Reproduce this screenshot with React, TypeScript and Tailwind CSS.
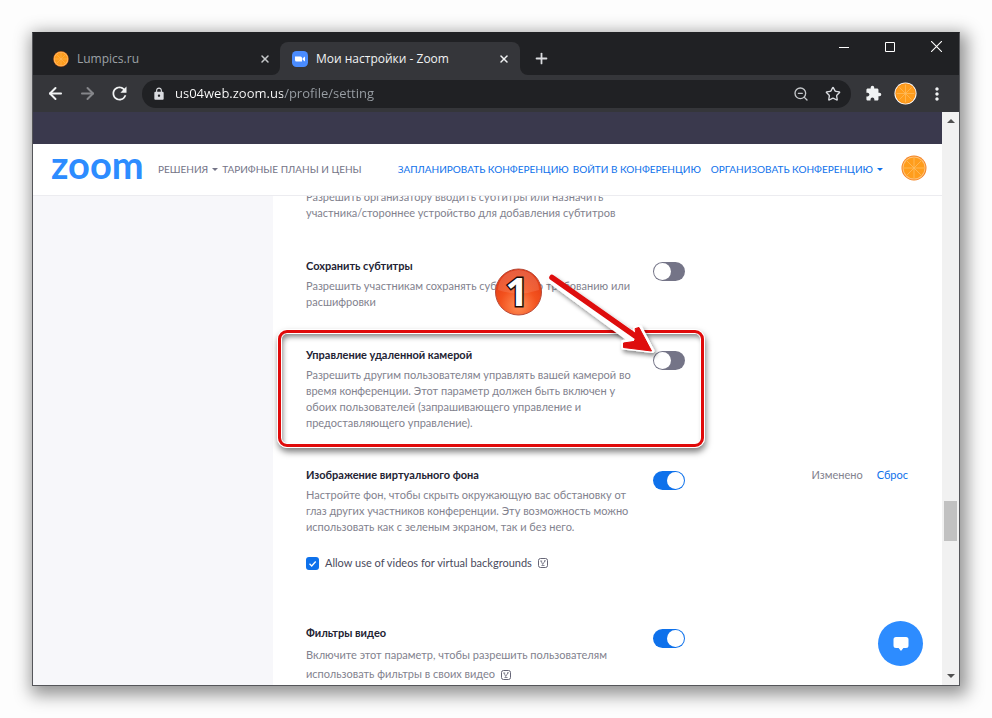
import type { ReactNode } from "react";
import { ArrowLeft, ArrowRight, Plus, Star, X, ZoomOut } from "lucide-react";
import { MdExtension, MdLock, MdMoreVert, MdRefresh } from "react-icons/md";

export default function App() {
  return (
    <div className="flex min-h-screen flex-col bg-[#fdfdfd] p-8 font-['Lato',sans-serif]">
      <div className="flex grow flex-col border border-[#55565a] border-t-[#202124] bg-white shadow-[3px_5px_16px_4px_rgba(0,0,0,0.42)]">
        <TabStrip />
        <Toolbar />
        <div className="flex grow">
          <div className="relative flex min-w-0 grow flex-col">
            <div className="h-8 bg-[#3a394d]" />
            <SiteHeader />
            <div className="flex grow overflow-hidden">
              <aside className="w-[240px] shrink-0 bg-[#f7f7fa]" />
              <Settings />
            </div>
            <button
              aria-label="Chat"
              className="absolute right-[19px] bottom-[19px] flex size-[45px] items-center justify-center rounded-full bg-[#2d8cff]"
            >
              <svg viewBox="0 0 16 14" className="h-[14px] w-4 fill-white">
                <path d="M3 0h10a2.5 2.5 0 0 1 2.5 2.5v6A2.5 2.5 0 0 1 13 11h-2.6L8 14l-2.4-3H3A2.5 2.5 0 0 1 .5 8.5v-6A2.5 2.5 0 0 1 3 0Z" />
              </svg>
            </button>
          </div>
          <Scrollbar />
        </div>
      </div>
    </div>
  );
}

function TabStrip() {
  return (
    <div className="flex h-[42px] items-end bg-[#202124] font-['Open_Sans',sans-serif] text-xs">
      <div className="flex h-[33px] w-[247px] shrink-0 items-center pr-[9px] pl-5 text-[#9da1a6]">
        <Orange className="size-4" />
        <span className="ml-2 grow">Lumpics.ru</span>
        <button aria-label="Close tab" className="text-[#c6c8ca]">
          <X className="size-3" strokeWidth={3} />
        </button>
      </div>
      <div className="relative flex h-[33px] w-[240px] shrink-0 items-center rounded-t-lg bg-[#35363a] pr-[10px] pl-3 text-[#f1f3f4]">
        <TabFlare className="absolute bottom-0 -left-2 size-2" />
        <TabFlare className="absolute -right-2 bottom-0 size-2 -scale-x-100" />
        <svg viewBox="0 0 16 16" className="size-4">
          <rect width="16" height="16" rx="4.5" fill="#4a8cff" />
          <path d="M3 5.5h5.5a1.5 1.5 0 0 1 1.5 1.5v3.5H4.5A1.5 1.5 0 0 1 3 9ZM10.6 7.2 13 5.5v5l-2.4-1.7Z" fill="#fff" />
        </svg>
        <span className="ml-2 grow">Мои настройки - Zoom</span>
        <button aria-label="Close tab">
          <X className="size-3" strokeWidth={3} />
        </button>
      </div>
      <button aria-label="New tab" className="mb-2 ml-[13px] text-[#dadcdf]">
        <Plus className="size-[17px]" strokeWidth={2.5} />
      </button>
      <div className="ml-auto flex items-center gap-9 self-start pt-2 pr-[17px] text-white">
        <button aria-label="Minimize">
          <svg viewBox="0 0 10 10" className="size-[10px]" stroke="currentColor">
            <path d="M0 5.5h10" />
          </svg>
        </button>
        <button aria-label="Maximize">
          <svg viewBox="0 0 10 10" className="size-[10px]" fill="none" stroke="currentColor">
            <path d="M.5.5h9v9h-9Z" />
          </svg>
        </button>
        <button aria-label="Close window">
          <svg viewBox="0 0 10 10" className="size-[11px]" stroke="currentColor">
            <path d="m0 0 10 10M10 0 0 10" />
          </svg>
        </button>
      </div>
    </div>
  );
}

function TabFlare({ className }: { className: string }) {
  return (
    <svg viewBox="0 0 8 8" className={className}>
      <path d="M8 0v8H0a8 8 0 0 0 8-8Z" fill="#35363a" />
    </svg>
  );
}

function Toolbar() {
  return (
    <div className="flex h-[37px] items-center bg-[#35363a] pr-3 pl-[13px] text-[#f1f3f4]">
      <button aria-label="Back">
        <ArrowLeft className="size-[19px]" strokeWidth={2.5} />
      </button>
      <button aria-label="Forward" className="ml-[13px] text-[#85868a]">
        <ArrowRight className="size-[19px]" strokeWidth={2.5} />
      </button>
      <button aria-label="Reload" className="ml-3">
        <MdRefresh className="size-[21px]" />
      </button>
      <div className="ml-3 flex h-7 grow items-center rounded-full bg-[#202124] px-[10px]">
        <MdLock className="size-[14px] text-[#dadce0]" />
        <input
          aria-label="Address"
          readOnly
          value="us04web.zoom.us/profile/setting"
          className="ml-[9px] min-w-0 grow bg-[linear-gradient(90deg,#ffffff_108px,#9aa0a6_108px)] bg-clip-text font-['Open_Sans',sans-serif] text-[13px] text-transparent outline-none"
        />
        <button aria-label="Zoom" className="text-[#c4c7ca]">
          <ZoomOut className="size-4" />
        </button>
        <button aria-label="Bookmark" className="ml-4 text-[#dadce0]">
          <Star className="size-4" />
        </button>
      </div>
      <button aria-label="Extensions" className="ml-[14px]">
        <MdExtension className="size-[17px]" />
      </button>
      <button aria-label="Profile" className="ml-3">
        <Orange className="size-[23px]" rim />
      </button>
      <button aria-label="Menu" className="ml-[10px]">
        <MdMoreVert className="size-5" />
      </button>
    </div>
  );
}

function SiteHeader() {
  return (
    <header className="flex h-[52px] items-center border-b border-[#ececf0] bg-white pr-[15px] pl-[18px] text-[10px] whitespace-nowrap">
      <a href="#" className="-mt-[10px] w-[90px] shrink-0 text-[38px] font-bold text-[#2d8cff]">
        zoom
      </a>
      <nav className="ml-[17px] flex items-center gap-1 text-[#747487]">
        <a href="#" className="flex items-center gap-1">
          РЕШЕНИЯ <Caret />
        </a>
        <a href="#">ТАРИФНЫЕ ПЛАНЫ И ЦЕНЫ</a>
      </nav>
      <nav className="ml-auto flex items-center text-[#0e71eb]">
        <a href="#">ЗАПЛАНИРОВАТЬ КОНФЕРЕНЦИЮ</a>
        <a href="#" className="ml-1">ВОЙТИ В КОНФЕРЕНЦИЮ</a>
        <a href="#" className="ml-[10px] flex items-center gap-1">
          ОРГАНИЗОВАТЬ КОНФЕРЕНЦИЮ <Caret />
        </a>
      </nav>
      <a href="#" aria-label="Profile" className="mb-1 ml-[18px] shrink-0">
        <Orange className="size-[26px]" />
      </a>
    </header>
  );
}

function Caret() {
  return (
    <svg viewBox="0 0 6 3" className="h-[3px] w-[6px]" fill="currentColor">
      <path d="M0 0h6L3 3Z" />
    </svg>
  );
}

function Settings() {
  return (
    <main className="min-w-0 grow bg-white pr-[34px] pl-[33px] text-[11px] leading-4 text-[#82828e]">
      <p className="-mt-[7px] w-[332px]">
        Разрешить организатору вводить субтитры или назначить участника/стороннее устройство для добавления субтитров
      </p>

      <Setting id="captions" title="Сохранить субтитры" className="mt-[37px]">
        <p>
          Разрешить участникам сохранять субтитры по требованию или
          <br />
          расшифровки
        </p>
      </Setting>

      <div className="relative mt-[37px]">
        <Setting id="camera" title="Управление удаленной камерой">
          <p>
            Разрешить другим пользователям управлять вашей камерой во
            <br />
            время конференции. Этот параметр должен быть включен у
            <br />
            обоих пользователей (запрашивающего управление и
            <br />
            предоставляющего управление).
          </p>
        </Setting>
        <Callout />
      </div>

      <Setting id="background" title="Изображение виртуального фона" className="mt-9" defaultOn changed>
        <p>
          Настройте фон, чтобы скрыть окружающую вас обстановку от
          <br />
          глаз других участников конференции. Эту возможность можно
          <br />
          использовать как с зеленым экраном, так и без него.
        </p>
        <label className="mt-5 flex items-center text-[#4a4a5c]">
          <span className="relative flex size-[13px]">
            <input type="checkbox" defaultChecked className="size-[13px] appearance-none rounded-[3px] bg-[#0e71eb]" />
            <svg viewBox="0 0 13 13" className="pointer-events-none absolute inset-0" fill="none" stroke="#fff" strokeWidth="1.3">
              <path d="m3.5 6.8 2.2 2.2 4-4.5" />
            </svg>
          </span>
          <span className="mr-[6px] ml-[6px]">Allow use of videos for virtual backgrounds</span>
          <InfoMark />
        </label>
      </Setting>

      <Setting id="filters" title="Фильтры видео" className="mt-[54px]" defaultOn>
        <p className="leading-[19px]">
          Включите этот параметр, чтобы разрешить пользователям
          <br />
          использовать фильтры в своих видео&nbsp; <InfoMark />
        </p>
      </Setting>
    </main>
  );
}

type SettingProps = {
  id: string;
  title: string;
  children: ReactNode;
  className?: string;
  defaultOn?: boolean;
  changed?: boolean;
};

function Setting({ id, title, children, className = "", defaultOn, changed }: SettingProps) {
  return (
    <section className={`flex items-start whitespace-nowrap ${className}`}>
      <div className="w-[347px] shrink-0">
        <label htmlFor={id} className="mb-1 block font-bold text-[#232333]">
          {title}
        </label>
        {children}
      </div>
      <input
        id={id}
        type="checkbox"
        role="switch"
        defaultChecked={defaultOn}
        className="mt-1 flex h-[19px] w-8 shrink-0 appearance-none rounded-full bg-[#747487] p-px before:size-[17px] before:rounded-full before:bg-white checked:justify-end checked:bg-[#0e71eb]"
      />
      {changed && (
        <div className="ml-auto flex gap-[14px]">
          <span>Изменено</span>
          <a href="#" className="text-[#0e71eb]">
            Сброс
          </a>
        </div>
      )}
    </section>
  );
}

function InfoMark() {
  return (
    <svg viewBox="0 0 10 10" className="inline size-[10px]" fill="none" stroke="#555568" strokeWidth="0.9">
      <rect x=".5" y=".5" width="9" height="9" rx="2" />
      <path d="M2.2 3h2M3.2 3.2 4.7 6.5l2.3-3.7M6 2.8h1.8M3.5 7.5h3" strokeWidth="0.7" />
    </svg>
  );
}

// red frame, numbered badge and arrow drawn over the camera setting
function Callout() {
  return (
    <>
      <div className="pointer-events-none absolute -top-[18px] -bottom-[17px] -left-[29px] w-[428px] rounded-[10px] border border-white shadow-[1px_4px_6px_rgba(0,0,0,0.5)]">
        <div className="h-full rounded-[9px] border-[3px] border-[#e00a0a] shadow-[inset_0_0_0_1px_#fff,inset_2px_4px_5px_rgba(0,0,0,0.45)]" />
      </div>
      <svg
        viewBox="490 260 176 104"
        className="pointer-events-none absolute -top-[87px] left-[184px] h-[104px] w-[176px] overflow-visible"
      >
        <defs>
          <radialGradient id="badge" cx="50%" cy="80%" r="80%">
            <stop offset="0" stopColor="#ff9058" />
            <stop offset="0.5" stopColor="#f3521e" />
            <stop offset="1" stopColor="#e03410" />
          </radialGradient>
          <linearGradient id="gloss" x1="0" y1="0" x2="0" y2="1">
            <stop offset="0" stopColor="#fff" stopOpacity="0.2" />
            <stop offset="1" stopColor="#fff" stopOpacity="0.1" />
          </linearGradient>
          <filter id="drop" x="-20%" y="-20%" width="150%" height="150%">
            <feDropShadow dx="2" dy="3" stdDeviation="2" floodOpacity="0.45" />
          </filter>
        </defs>
        <g filter="url(#drop)" strokeLinecap="round" strokeLinejoin="round">
          <path
            d="m552 277.5 82 56.500 1.500-6.500 4.500-.5 12.500 24-29.500-3.500 0-5.500 7-1.500-80.500-59.500Z"
            fill="#fff"
            stroke="#fff"
            strokeWidth="4"
          />
          <path d="m552 277.500 84 59" stroke="#de0808" strokeWidth="5.500" />
          <path d="m635.500 328.500 3.500-1 12.500 23.500-28-3.500v-4.500l10.500-1.500 2-4Z" fill="#de0808" stroke="#de0808" />
        </g>
        <circle cx="518.5" cy="292" r="23" fill="url(#badge)" stroke="#b84a38" strokeWidth="1" />
        <path d="M498 290a20.5 20 0 0 1 41 0q-20 7-41 0Z" fill="url(#gloss)" />
        <text
          x="517"
          y="306"
          textAnchor="middle"
          className="font-['Open_Sans',sans-serif] text-[40px] font-bold"
          fill="#fff"
          stroke="#1c0c08"
          strokeWidth="3"
          paintOrder="stroke"
        >
          1
        </text>
      </svg>
    </>
  );
}

function Orange({ className, rim }: { className: string; rim?: boolean }) {
  return (
    <svg viewBox="0 0 26 26" className={className}>
      <circle cx="13" cy="13" r="12.5" fill={rim ? "#fff" : "#f58220"} />
      <circle cx="13" cy="13" r="11.5" fill={rim ? "#f7931e" : "#ffc37a"} />
      <circle cx="13" cy="13" r="10.5" fill="#ff9d1c" />
      <path d="M13 3v20M3 13h20M6 6l14 14M20 6 6 20" stroke="#ffbe63" strokeWidth="0.8" />
    </svg>
  );
}

function Scrollbar() {
  return (
    <div className="flex w-[17px] shrink-0 flex-col items-center bg-[#f1f1f1] py-[7px] text-[#505050]">
      <svg viewBox="0 0 8 4" className="h-1 w-2" fill="currentColor">
        <path d="M0 4h8L4 0Z" />
      </svg>
      <div className="grow-[378]" />
      <div className="h-10 w-[13px] bg-[#c1c1c1]" />
      <div className="grow-[133]" />
      <svg viewBox="0 0 8 4" className="h-1 w-2" fill="currentColor">
        <path d="M0 0h8L4 4Z" />
      </svg>
    </div>
  );
}
